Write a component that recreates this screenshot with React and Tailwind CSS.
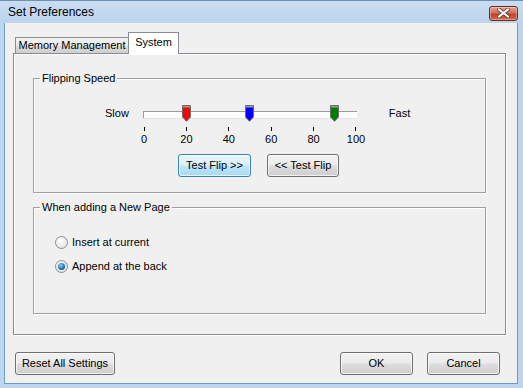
import React from 'react';

const font = "font-['Liberation_Sans',Arial,sans-serif]";

const btn =
  'flex h-[23px] items-center justify-center rounded-[3px] border text-[11px] leading-none text-black shadow-[inset_0_0_0_1px_rgba(255,255,255,0.7)]';
const btnNormal =
  'border-[#707070] bg-[linear-gradient(#f2f2f2,#ebebeb_48%,#dddddd_52%,#cfcfcf)]';
const btnFocus =
  'border-[#3c7fb1] bg-[linear-gradient(#eaf6fd,#d9f0fc_48%,#bee6fd_52%,#a7d9f5)]';

function Thumb({ value, color }) {
  const left = 1 + value * 2.12 - 4.5;
  return (
    <svg
      width="9"
      height="17"
      viewBox="0 0 9 17"
      className="absolute top-0"
      style={{ left }}
    >
      <path d="M0.5 0.5H8.5V12L4.5 16.3L0.5 12Z" fill={color} stroke="#6d6d6d" />
      <rect x="1" y="1" width="7" height="1.5" fill="#9a9a9a" />
    </svg>
  );
}

function Radio({ checked, label }) {
  return (
    <div className="flex h-[16px] items-center gap-[4px]">
      <div className="flex h-[13px] w-[13px] items-center justify-center rounded-full border border-[#8e8f8f] bg-[radial-gradient(circle_at_40%_35%,#ffffff,#dcdcdc)]">
        {checked && (
          <div className="h-[7px] w-[7px] rounded-full bg-[radial-gradient(circle_at_40%_35%,#8fd0f6,#1a6fb0_60%,#0d4a80)]" />
        )}
      </div>
      <span className="text-[11px] leading-[13px]">{label}</span>
    </div>
  );
}

function Group({ title, className, children }) {
  return (
    <div
      className={`mx-[19px] border border-[#a0a0a0] shadow-[1px_1px_0_#ffffff,inset_1px_1px_0_#ffffff] ${className}`}
    >
      <div className="-mt-[7px] ml-[6px] w-fit bg-[#f0f0f0] px-[2px] text-[11px] leading-[13px]">
        {title}
      </div>
      {children}
    </div>
  );
}

export default function App() {
  const ticks = [0, 20, 40, 60, 80, 100];

  return (
    <div className={`${font} flex h-[388px] w-[523px] flex-col bg-[#bdd5ee] text-black`}>
      {/* title bar */}
      <div className="flex h-[23px] items-center justify-between border-t border-[#6f8fb3] bg-[linear-gradient(#c9ddf1,#bcd4ec)] pl-[8px] pr-[5px]">
        <span className="text-[12px] leading-none">Set Preferences</span>
        <div className="mt-[2px] flex h-[15px] w-[29px] items-center justify-center rounded-[3px] border border-[#6b2a20] bg-[linear-gradient(#e8a493,#d0705c_45%,#c0442c_55%,#d66a4e)] shadow-[inset_0_0_0_1px_rgba(255,255,255,0.35)]">
          <svg width="13" height="10" viewBox="0 0 13 10">
            <path d="M2 1.5L11 8.5M11 1.5L2 8.5" stroke="#5a3a36" strokeWidth="3.6" strokeLinecap="square" />
            <path d="M2 1.5L11 8.5M11 1.5L2 8.5" stroke="#ffffff" strokeWidth="2" strokeLinecap="square" />
          </svg>
        </div>
      </div>

      {/* body */}
      <div className="mx-[4px] mb-[4px] mr-[5px] flex flex-1 flex-col border border-t-0 border-[#6a9ccc] bg-[#f0f0f0]">
        {/* tabs */}
        <div className="ml-[10px] mt-[9px] flex items-end">
          <div className="flex h-[16px] w-[113px] items-center justify-center border border-b-0 border-r-0 border-[#898c95] bg-[linear-gradient(#f2f2f2,#ebebeb_50%,#dddddd_50%,#cfcfcf)] text-[11px] leading-none">
            Memory Management
          </div>
          <div className="relative z-10 -mb-px flex h-[22px] w-[51px] items-center justify-center border border-b-0 border-[#898c95] bg-white pb-[3px] text-[11px] leading-none">
            System
          </div>
        </div>

        {/* panel */}
        <div className="ml-[8px] flex h-[282px] w-[493px] flex-col border border-[#898c95] bg-[#f0f0f0] shadow-[1px_1px_0_#ffffff,inset_1px_1px_0_#ffffff]">
          <Group title="Flipping Speed" className="mt-[24px] h-[115px]">
            <div className="mt-[20px] flex items-start pl-[71px]">
              <span className="mt-[2px] text-[11px] leading-[13px]">Slow</span>
              <div className="relative ml-[14px] h-[17px] w-[214px]">
                <div className="mt-[6px] h-[7px] w-full border-l border-t border-[#9a9a9a] bg-white shadow-[0_1px_0_#e3e3e3]" />
                <Thumb value={20} color="#ff0000" />
                <Thumb value={50} color="#0000ff" />
                <Thumb value={90} color="#008000" />
              </div>
              <span className="ml-[32px] mt-[2px] text-[11px] leading-[13px]">Fast</span>
            </div>
            <div className="ml-[98px] mt-[5px] flex w-[236px] justify-between">
              {ticks.map((t) => (
                <div key={t} className="flex w-[24px] flex-col items-center">
                  <div className="h-[4px] w-px bg-black" />
                  <span className="mt-[2px] text-[11px] leading-[13px]">{t}</span>
                </div>
              ))}
            </div>
            <div className="ml-[144px] mt-[8px] flex gap-[16px]">
              <div className={`${btn} ${btnFocus} w-[73px]`}>Test Flip &gt;&gt;</div>
              <div className={`${btn} ${btnNormal} w-[72px]`}>&lt;&lt; Test Flip</div>
            </div>
          </Group>

          <Group title="When adding a New Page" className="mt-[14px] h-[107px]">
            <div className="ml-[21px] mt-[20px] flex flex-col gap-[8px]">
              <Radio label="Insert at current" />
              <Radio checked label="Append at the back" />
            </div>
          </Group>
        </div>

        {/* bottom buttons */}
        <div className="ml-[10px] mr-[17px] mt-[17px] flex">
          <div className={`${btn} ${btnNormal} w-[100px]`}>Reset All Settings</div>
          <div className="flex-1" />
          <div className={`${btn} ${btnNormal} w-[73px]`}>OK</div>
          <div className={`${btn} ${btnNormal} ml-[14px] w-[73px]`}>Cancel</div>
        </div>
      </div>
    </div>
  );
}
